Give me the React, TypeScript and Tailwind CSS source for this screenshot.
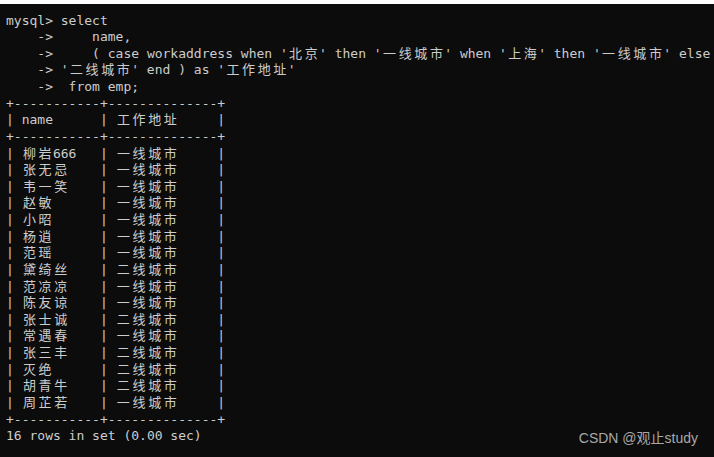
import React from "react";

const isCJK = (c: string) => /[\u3000-\u9fff\uff00-\uffef]/.test(c);
const dw = (s: string) => Array.from(s).reduce((a, c) => a + (isCJK(c) ? 2 : 1), 0);
const pad = (s: string, n: number) => s + " ".repeat(Math.max(0, n - dw(s)));

const rows: [string, string][] = [
  ["柳岩666", "一线城市"],
  ["张无忌", "一线城市"],
  ["韦一笑", "一线城市"],
  ["赵敏", "一线城市"],
  ["小昭", "一线城市"],
  ["杨逍", "一线城市"],
  ["范瑶", "一线城市"],
  ["黛绮丝", "二线城市"],
  ["范凉凉", "一线城市"],
  ["陈友谅", "一线城市"],
  ["张士诚", "二线城市"],
  ["常遇春", "一线城市"],
  ["张三丰", "二线城市"],
  ["灭绝", "二线城市"],
  ["胡青牛", "二线城市"],
  ["周芷若", "一线城市"],
];

const sep = "+-----------+--------------+";
const row = (a: string, b: string) => "| " + pad(a, 10) + "| " + pad(b, 13) + "|";

const lines: string[] = [
  "mysql> select",
  "    ->     name,",
  "    ->     ( case workaddress when '北京' then '一线城市' when '上海' then '一线城市' else",
  "    -> '二线城市' end ) as '工作地址'",
  "    ->  from emp;",
  sep,
  row("name", "工作地址"),
  sep,
  ...rows.map(([a, b]) => row(a, b)),
  sep,
];

function Line({ text }: { text: string }) {
  const parts: React.ReactNode[] = [];
  let buf = "";
  Array.from(text).forEach((c, i) => {
    if (isCJK(c)) {
      if (buf) {
        parts.push(buf);
        buf = "";
      }
      parts.push(
        <span key={i} className="inline-block w-[2ch] text-center">
          {c}
        </span>
      );
    } else buf += c;
  });
  if (buf) parts.push(buf);
  return <div className="h-[16.64px] whitespace-pre">{parts}</div>;
}

export default function App() {
  return (
    <div className="w-[714px] h-[457px] bg-white pt-[4px] overflow-hidden">
      <div
        className="h-full bg-[#0c0c0c] text-[#cccccc] text-[13px] leading-[16.64px] pl-[6px] pt-[8.5px]"
        style={{ fontFamily: '"DejaVu Sans Mono", "Noto Sans CJK SC", monospace' }}
      >
        {lines.map((l, i) => (
          <Line key={i} text={l} />
        ))}
        <div className="flex justify-between items-center h-[16.64px] pr-[16px]">
          <span className="whitespace-pre">16 rows in set (0.00 sec)</span>
          <span
            className="text-[14px] text-[#a8a8a8] relative top-[2px]"
            style={{ fontFamily: '"Liberation Sans", "Noto Sans CJK SC", sans-serif' }}
          >
            CSDN @观止study
          </span>
        </div>
      </div>
    </div>
  );
}
